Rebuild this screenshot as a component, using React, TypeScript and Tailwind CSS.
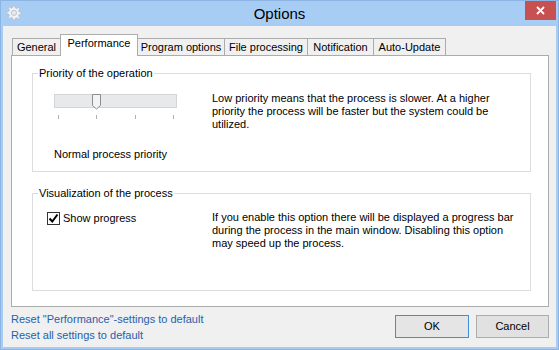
import React from 'react';

const font = { fontFamily: '"Liberation Sans", Arial, sans-serif' };

const tabs = [
  { label: 'General', w: 'w-[49px]' },
  { label: 'Performance', w: 'w-[78px]', active: true },
  { label: 'Program options', w: 'w-[88px]' },
  { label: 'File processing', w: 'w-[84px]' },
  { label: 'Notification', w: 'w-[67px]' },
  { label: 'Auto-Update', w: 'w-[73px]' },
];

const Gear = () => (
  <svg width="16" height="16" viewBox="0 0 16 16">
    <path
      d="M7 1h2l.4 2 1.3.6 1.7-1.2 1.4 1.4-1.2 1.7.6 1.3 2 .4v2l-2 .4-.6 1.3 1.2 1.7-1.4 1.4-1.7-1.2-1.3.6L9 15H7l-.4-2-1.3-.6-1.7 1.2-1.4-1.4 1.2-1.7L2.8 9.2.8 8.8v-2l2-.4.6-1.3-1.2-1.7 1.4-1.4 1.7 1.2 1.3-.6z"
      fill="#eef2f7"
      stroke="#b4bdc8"
      strokeWidth="0.8"
    />
    <circle cx="8" cy="7.9" r="2.6" fill="#e3e9f0" stroke="#b4bdc8" strokeWidth="0.8" />
  </svg>
);

const GroupBox: React.FC<{ title: string; h: string; children: React.ReactNode }> = ({ title, h, children }) => (
  <div className={`relative w-[499px] ${h} border border-[#dcdcdc]`}>
    <span className="absolute left-[5px] -top-[8px] bg-white px-px text-[11px] leading-[14px] text-black whitespace-nowrap">{title}</span>
    {children}
  </div>
);

const App: React.FC = () => {
  return (
    <div style={font} className="w-[559px] h-[350px] bg-[#a7cdf4] border border-[#8db5e4] flex flex-col overflow-hidden">
      {/* title bar */}
      <div className="h-[25px] flex items-start">
        <div className="w-[60px] pl-[5px] pt-[4px]">
          <Gear />
        </div>
        <div className="flex-1 text-center text-[15px] leading-[25px] text-black">Options</div>
        <div className="w-[60px] flex justify-end pr-[2px]">
          <div className="w-[31px] h-[20px] -mt-px bg-[#c75050] flex items-center justify-center">
            <svg width="9" height="9" viewBox="0 0 9 9">
              <path d="M1 1l7 7M8 1L1 8" stroke="#fff" strokeWidth="1.8" />
            </svg>
          </div>
        </div>
      </div>

      {/* client area */}
      <div className="mx-[2px] mb-[2px] flex-1 bg-[#f0f0f0] flex flex-col">
        <div className="ml-[9px] mt-[8px] h-[21px] flex items-end">
          {tabs.map((t, i) =>
            t.active ? (
              <div
                key={t.label}
                className={`${t.w} h-[22px] -mb-px -ml-px shrink-0 relative z-10 bg-white border border-b-0 border-[#acacac] text-[11px] leading-[17px] text-center text-black whitespace-nowrap`}
              >
                {t.label}
              </div>
            ) : (
              <div
                key={t.label}
                className={`${t.w} h-[17px] shrink-0 ${i > 0 ? '-ml-px' : ''} bg-[#f0f0f0] border border-b-0 border-[#acacac] text-[11px] leading-[17px] text-center text-black whitespace-nowrap`}
              >
                {t.label}
              </div>
            )
          )}
        </div>

        <div className="ml-[8px] w-[538px] h-[252px] bg-white border border-[#acacac] pl-[20px] pt-[17px] flex flex-col gap-[21px]">
          <GroupBox title="Priority of the operation" h="h-[99px]">
            <div className="flex">
              <div className="w-[179px] shrink-0 pl-[21px] pt-[20px] flex flex-col">
                <div className="relative w-[123px] h-[14px] bg-[#e7e9ea] border border-[#d4d4d4]">
                  <svg className="absolute left-[37px] -top-px" width="10" height="16" viewBox="0 0 10 16">
                    <path d="M0.5 0.5h8v11l-4 3.5-4-3.5z" fill="#f3f3f3" stroke="#8e8e8e" />
                  </svg>
                </div>
                <div className="ml-[4px] w-[116px] mt-[7px] h-[4px] flex justify-between">
                  <div className="w-px h-[4px] bg-[#b0b0b0]" />
                  <div className="w-px h-[4px] bg-[#b0b0b0]" />
                  <div className="w-px h-[4px] bg-[#b0b0b0]" />
                  <div className="w-px h-[4px] bg-[#b0b0b0]" />
                </div>
                <div className="mt-[29px] text-[11px] leading-[13px] text-black whitespace-nowrap">Normal process priority</div>
              </div>
              <div className="pt-[18px] text-[11px] leading-[13px] text-black whitespace-nowrap">
                Low priority means that the process is slower. At a higher
                <br />
                priority the process will be faster but the system could be
                <br />
                utilized.
              </div>
            </div>
          </GroupBox>

          <GroupBox title="Visualization of the process" h="h-[98px]">
            <div className="flex">
              <div className="w-[179px] shrink-0 pl-[14px] pt-[18px] flex items-center gap-[3px] self-start">
                <div className="w-[13px] h-[13px] border border-[#333] bg-white flex items-center justify-center">
                  <svg width="11" height="11" viewBox="0 0 11 11">
                    <path d="M1.5 5.5l2.8 3 5.2-7" fill="none" stroke="#000" strokeWidth="2" />
                  </svg>
                </div>
                <span className="text-[11px] leading-[13px] text-black whitespace-nowrap">Show progress</span>
              </div>
              <div className="pt-[17px] text-[11px] leading-[13px] text-black whitespace-nowrap">
                If you enable this option there will be displayed a progress bar
                <br />
                during the process in the main window. Disabling this option
                <br />
                may speed up the process.
              </div>
            </div>
          </GroupBox>
        </div>

        <div className="ml-[8px] w-[538px] flex justify-between">
          <div className="pt-[4px] flex flex-col text-[11px] leading-[16px] text-[#1f5fae]">
            <span>Reset "Performance"-settings to default</span>
            <span>Reset all settings to default</span>
          </div>
          <div className="pt-[8px] flex gap-[7px]">
            <button className="w-[74px] h-[23px] bg-[#e5e5e5] border border-[#3c8fd9] text-[11px] text-black">OK</button>
            <button className="w-[73px] h-[23px] bg-[#e1e1e1] border border-[#acacac] text-[11px] text-black">Cancel</button>
          </div>
        </div>
      </div>
    </div>
  );
};

export default App;
